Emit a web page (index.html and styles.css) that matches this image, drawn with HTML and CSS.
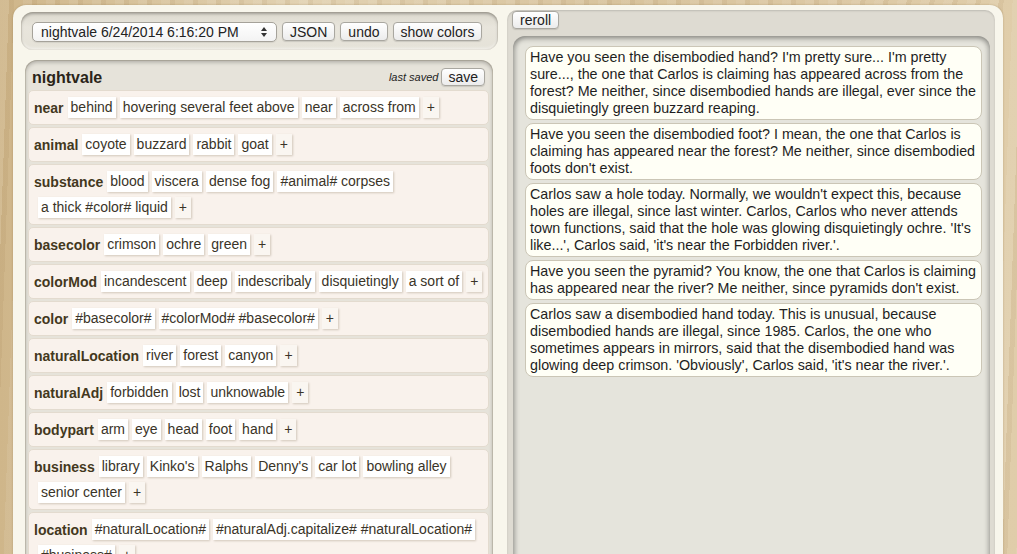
FILE: index.html
```html
<!DOCTYPE html>
<html>
<head>
<meta charset="utf-8">
<link rel="stylesheet" href="styles.css">
</head>
<body>
<div class="frame">
  <div class="left">
    <div class="controls">
      <div class="select">
        <span>nightvale 6/24/2014 6:16:20 PM</span>
        <svg class="arrows" width="8" height="12" viewBox="0 0 8 12"><path d="M4 1 L7 5 L1 5 Z M4 11 L7 7 L1 7 Z" fill="#333"/></svg>
      </div>
      <button class="btn">JSON</button>
      <button class="btn">undo</button>
      <button class="btn">show colors</button>
    </div>
    <div class="grammar">
      <div class="ghead">
        <span class="gtitle">nightvale</span>
        <span class="saved"><i>last saved</i><button class="btn save">save</button></span>
      </div>
      <div class="rule"><b class="key">near</b><span class="tag">behind</span><span class="tag">hovering several feet above</span><span class="tag">near</span><span class="tag">across from</span><span class="tag plus">+</span></div>
      <div class="rule"><b class="key">animal</b><span class="tag">coyote</span><span class="tag">buzzard</span><span class="tag">rabbit</span><span class="tag">goat</span><span class="tag plus">+</span></div>
      <div class="rule"><b class="key">substance</b><span class="tag">blood</span><span class="tag">viscera</span><span class="tag">dense fog</span><span class="tag">#animal# corpses</span><span class="tag">a thick #color# liquid</span><span class="tag plus">+</span></div>
      <div class="rule"><b class="key">basecolor</b><span class="tag">crimson</span><span class="tag">ochre</span><span class="tag">green</span><span class="tag plus">+</span></div>
      <div class="rule"><b class="key">colorMod</b><span class="tag">incandescent</span><span class="tag">deep</span><span class="tag">indescribaly</span><span class="tag">disquietingly</span><span class="tag">a sort of</span><span class="tag plus">+</span></div>
      <div class="rule"><b class="key">color</b><span class="tag">#basecolor#</span><span class="tag">#colorMod# #basecolor#</span><span class="tag plus">+</span></div>
      <div class="rule"><b class="key">naturalLocation</b><span class="tag">river</span><span class="tag">forest</span><span class="tag">canyon</span><span class="tag plus">+</span></div>
      <div class="rule"><b class="key">naturalAdj</b><span class="tag">forbidden</span><span class="tag">lost</span><span class="tag">unknowable</span><span class="tag plus">+</span></div>
      <div class="rule"><b class="key">bodypart</b><span class="tag">arm</span><span class="tag">eye</span><span class="tag">head</span><span class="tag">foot</span><span class="tag">hand</span><span class="tag plus">+</span></div>
      <div class="rule"><b class="key">business</b><span class="tag">library</span><span class="tag">Kinko's</span><span class="tag">Ralphs</span><span class="tag">Denny's</span><span class="tag">car lot</span><span class="tag">bowling alley</span><span class="tag">senior center</span><span class="tag plus">+</span></div>
      <div class="rule"><b class="key">location</b><span class="tag">#naturalLocation#</span><span class="tag">#naturalAdj.capitalize# #naturalLocation#</span><span class="tag">#business#</span><span class="tag plus">+</span></div>
    </div>
  </div>
  <div class="right">
    <div class="rtop"><button class="btn reroll">reroll</button></div>
    <div class="output">
      <div class="story">Have you seen the disembodied hand? I'm pretty sure... I'm pretty sure..., the one that Carlos is claiming has appeared across from the forest? Me neither, since disembodied hands are illegal, ever since the disquietingly green buzzard reaping.</div>
      <div class="story">Have you seen the disembodied foot? I mean, the one that Carlos is claiming has appeared near the forest? Me neither, since disembodied foots don't exist.</div>
      <div class="story">Carlos saw a hole today. Normally, we wouldn't expect this, because holes are illegal, since last winter. Carlos, Carlos who never attends town functions, said that the hole was glowing disquietingly ochre. 'It's like...', Carlos said, 'it's near the Forbidden river.'.</div>
      <div class="story">Have you seen the pyramid? You know, the one that Carlos is claiming has appeared near the river? Me neither, since pyramids don't exist.</div>
      <div class="story">Carlos saw a disembodied hand today. This is unusual, because disembodied hands are illegal, since 1985. Carlos, the one who sometimes appears in mirrors, said that the disembodied hand was glowing deep crimson. 'Obviously', Carlos said, 'it's near the river.'.</div>
    </div>
  </div>
</div>
</body>
</html>
```

FILE: styles.css
```css
html, body {
  margin: 0;
  padding: 0;
  height: 554px;
  overflow: hidden;
}
body {
  font-family: "Liberation Sans", Arial, Helvetica, sans-serif;
  font-size: 14px;
  color: #222;
  background-color: #d9c49e;
  background-image:
    repeating-linear-gradient(92deg, rgba(255,255,255,0.08) 0 9px, rgba(120,80,30,0.07) 9px 14px, rgba(255,255,255,0) 14px 23px),
    linear-gradient(90deg, #cfb68a, #e2d2b2 30%, #d8c39d 60%, #e0cdaa);
}
.frame {
  margin: 5px 14px 0 13px;
  background: #f8f6ec;
  border-radius: 13px 13px 0 0;
  padding: 7px 8px 0 8px;
  height: 600px;
  display: flex;
  gap: 9px;
  box-shadow: 0 0 2px rgba(120, 90, 40, 0.4);
}
.left {
  width: 477px;
  display: flex;
  flex-direction: column;
}
.controls {
  height: 38px;
  box-sizing: border-box;
  padding: 10px 11px 0 11px;
  border-radius: 12px;
  background: linear-gradient(#dcd9ce, #e8e5dc 40%, #e5e2d8);
  box-shadow: inset 0 2px 3px rgba(0,0,0,0.28), inset 0 -2px 3px rgba(255,255,255,0.5), inset 0 0 0 1px #d6d1c3;
  display: flex;
  align-items: flex-start;
  gap: 5px;
}
.select {
  width: 245px;
  height: 20px;
  box-sizing: border-box;
  border: 1px solid #a5a29a;
  border-radius: 5px;
  background: linear-gradient(#ffffff, #f3f3f3);
  display: flex;
  align-items: center;
  justify-content: space-between;
  padding: 0 8px 0 8px;
  font-size: 14px;
  color: #222;
  box-shadow: 0 1px 1px rgba(0,0,0,0.08);
}
.arrows { display: block; }
.btn {
  font-family: "Liberation Sans", Arial, Helvetica, sans-serif;
  font-size: 14px;
  color: #222;
  height: 19px;
  line-height: 16px;
  padding: 0 7px;
  border: 1px solid #a9a7a0;
  border-radius: 4px;
  background: linear-gradient(#ffffff, #ececec);
  box-shadow: 0 1px 1px rgba(0,0,0,0.12);
  margin: 0;
}
.grammar {
  margin: 10px 5px 0 4px;
  padding: 4px 4px 0 3px;
  border-radius: 12px;
  background: #e6e3da;
  box-shadow: inset 0 2px 4px rgba(0,0,0,0.28), inset 0 0 0 1px #d3cebf;
  flex: 1;
}
.ghead {
  height: 26px;
  display: flex;
  align-items: center;
  justify-content: space-between;
  padding: 0 4px 0 4px;
}
.gtitle {
  font-weight: bold;
  font-size: 16px;
  color: #2a2418;
  position: relative;
  top: 1px;
}
.saved {
  display: flex;
  align-items: center;
  gap: 3px;
}
.saved i {
  font-size: 11px;
  color: #222;
}
.save {
  height: 18px;
  padding: 0 6px;
  font-size: 14px;
}
.rule {
  background: #f9f2ec;
  border: 1px solid #e3dbcf;
  border-radius: 5px;
  padding: 6px 3px 6px 5px;
  margin-bottom: 2px;
  display: flex;
  flex-wrap: wrap;
  align-items: center;
  row-gap: 5px;
}
.key {
  font-weight: bold;
  color: #43381d;
  font-size: 14px;
  line-height: 21px;
  position: relative;
  top: 1px;
}
.tag {
  background: #ffffff;
  color: #3a3428;
  height: 21px;
  line-height: 21px;
  padding: 0 3px;
  margin-left: 4px;
  box-shadow: 1px 1px 2px rgba(90, 70, 40, 0.25);
  white-space: nowrap;
}
.tag.plus {
  padding: 0 4px;
  background: #faf6f1;
}
.right {
  width: 488px;
  margin-top: -2px;
  display: flex;
  flex-direction: column;
  background: #dedbd2;
  border-radius: 10px 10px 0 0;
  box-shadow: inset 0 1px 2px rgba(0,0,0,0.15);
}
.rtop {
  height: 26px;
  padding: 1px 0 0 5px;
  box-sizing: border-box;
}
.reroll {
  height: 18px;
  padding: 0 7px;
}
.output {
  margin: 0 5px 0 6px;
  flex: 1;
  background: #e5e4dc;
  border-radius: 12px 12px 0 0;
  box-shadow: inset 0 3px 5px rgba(0,0,0,0.28), inset 3px 0 4px rgba(0,0,0,0.15), inset -3px 0 4px rgba(0,0,0,0.1);
  padding: 10px 0 0 12px;
}
.story {
  width: 457px;
  box-sizing: border-box;
  background: #fffff6;
  border: 1px solid #cbc6b6;
  border-radius: 8px;
  padding: 2px 2px 2px 4px;
  margin-bottom: 3px;
  line-height: 17px;
  font-size: 14.3px;
  color: #1e1e1e;
}
```
